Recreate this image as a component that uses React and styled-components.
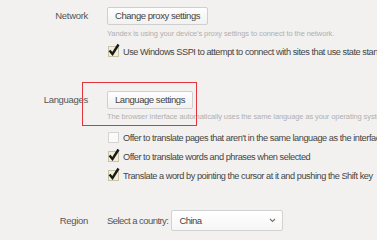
import React from "react";
import styled, { createGlobalStyle } from "styled-components";

const Global = createGlobalStyle`
  html, body {
    margin: 0;
    background: #f2f1f0;
    font-family: "Liberation Sans", Arial, sans-serif;
    overflow: hidden;
  }
`;

const Page = styled.div`
  width: 377px;
  height: 240px;
  padding-top: 7px;
  box-sizing: border-box;
  white-space: nowrap;
`;

const Section = styled.div`
  position: relative;
  display: grid;
  grid-template-columns: 88px 1fr;
  column-gap: 19px;
  margin-top: ${(p) => p.$gap || 0}px;
`;

const Label = styled.div`
  text-align: right;
  font-size: 9.5px;
  letter-spacing: -0.3px;
  color: #555;
  line-height: ${(p) => p.$lh || 18}px;
`;

const Content = styled.div`
  display: flex;
  flex-direction: column;
  align-items: flex-start;
  min-width: 0;
`;

const Button = styled.button`
  height: 18px;
  padding: 0 7px;
  font-family: inherit;
  font-size: 9.5px;
  letter-spacing: -0.45px;
  color: #444;
  background: linear-gradient(#fefefe, #f1f1f1);
  border: 1px solid #cfcfcf;
  border-radius: 2px;
  line-height: 16px;
`;

const Hint = styled.div`
  margin-top: ${(p) => p.$mt || 4}px;
  font-size: 7.5px;
  letter-spacing: -0.1px;
  line-height: 10px;
  color: #b0b0b0;
`;

const Row = styled.label`
  display: flex;
  align-items: center;
  height: 19px;
  margin-top: ${(p) => p.$mt || 0}px;
  font-size: 9.2px;
  letter-spacing: -0.45px;
  color: #444;
`;

const Box = styled.span`
  position: relative;
  width: 9px;
  height: 9px;
  margin: 0 4px 0 1px;
  flex: none;
  border: 1px solid ${(p) => (p.$on ? "#c9c4a8" : "#d4d4d4")};
  background: ${(p) => (p.$on ? "#f3efd6" : "#fafafa")};
  svg {
    position: absolute;
    left: -1px;
    top: -4px;
  }
`;

const Highlight = styled.div`
  position: absolute;
  left: 82px;
  top: -9px;
  width: 113px;
  height: 42px;
  border: 1.5px solid #e2343c;
`;

const Select = styled.div`
  display: flex;
  align-items: center;
  justify-content: space-between;
  width: 112px;
  height: 21px;
  box-sizing: border-box;
  margin-left: 3px;
  padding: 0 6px 0 7px;
  border: 1px solid #d2d2d2;
  border-radius: 2px;
  background: linear-gradient(#ffffff, #f6f6f6);
  color: #444;
`;

const Inline = styled.div`
  display: flex;
  align-items: center;
  font-size: 9.5px;
  letter-spacing: -0.55px;
  color: #555;
`;

const Check = ({ on }) => (
  <Box $on={on}>
    {on && (
      <svg width="12" height="13" viewBox="0 0 12 13">
        <path d="M1.5 7.5 L4.5 11 L10.5 1.5" fill="none" stroke="#1a1a1a" strokeWidth="2.4" strokeLinejoin="miter" />
      </svg>
    )}
  </Box>
);

const Option = ({ on, children, mt }) => (
  <Row $mt={mt}>
    <Check on={on} />
    {children}
  </Row>
);

export default function App() {
  return (
    <Page>
      <Global />
      <Section>
        <Label>Network</Label>
        <Content>
          <Button>Change proxy settings</Button>
          <Hint>Yandex is using your device's proxy settings to connect to the network.</Hint>
          <Option on mt={3}>Use Windows SSPI to attempt to connect with sites that use state standards</Option>
        </Content>
      </Section>

      <Section $gap={30}>
        <Highlight />
        <Label>Languages</Label>
        <Content>
          <Button>Language settings</Button>
          <Hint $mt={3}>The browser interface automatically uses the same language as your operating system</Hint>
          <Option mt={6}>Offer to translate pages that aren't in the same language as the interface</Option>
          <Option on>Offer to translate words and phrases when selected</Option>
          <Option on>Translate a word by pointing the cursor at it and pushing the Shift key</Option>
        </Content>
      </Section>

      <Section $gap={25}>
        <Label $lh={21}>Region</Label>
        <Content>
          <Inline>
            Select a country:
            <Select>
              China
              <svg width="7" height="5" viewBox="0 0 7 5">
                <path d="M1 1 L3.5 3.5 L6 1" fill="none" stroke="#777" strokeWidth="1.2" />
              </svg>
            </Select>
          </Inline>
        </Content>
      </Section>
    </Page>
  );
}
